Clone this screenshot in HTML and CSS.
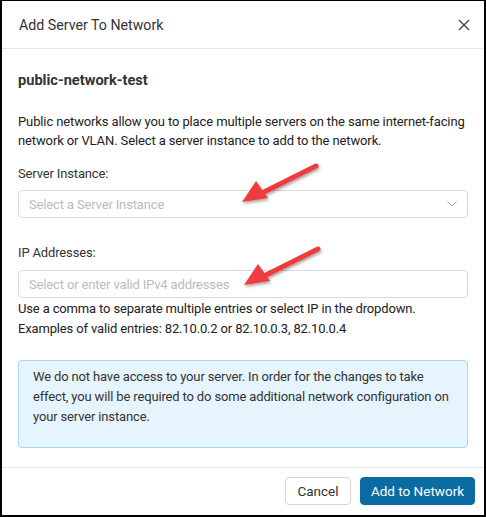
FILE: index.html
```html
<!DOCTYPE html>
<html>
<head>
    <title>Add Server To Network</title>
    <link rel="stylesheet" href="styles.css">
</head>
<body>
    <div class="modal">
        <div class="modal-header">
            <h2>Add Server To Network</h2>
            <button class="close-btn" aria-label="Close">
                <svg width="12" height="12" viewBox="0 0 12 12"><path d="M1 1L11 11M11 1L1 11" stroke="#444" stroke-width="1.4" fill="none"/></svg>
            </button>
        </div>
        <div class="modal-body">
            <h3>public-network-test</h3>
            <p class="intro">Public networks allow you to place multiple servers on the same internet-facing network or VLAN. Select a server instance to add to the network.</p>

            <label class="field-label">Server Instance:</label>
            <div class="select-box">
                <span class="placeholder">Select a Server Instance</span>
                <svg width="10" height="6" viewBox="0 0 10 6"><path d="M0.5 0.5L5 5L9.5 0.5" stroke="#999" stroke-width="1" fill="none"/></svg>
            </div>

            <label class="field-label ip-label">IP Addresses:</label>
            <div class="text-box">
                <span class="placeholder">Select or enter valid IPv4 addresses</span>
            </div>
            <p class="help">Use a comma to separate multiple entries or select IP in the dropdown.<br>Examples of valid entries: 82.10.0.2 or 82.10.0.3, 82.10.0.4</p>

            <div class="info-box">
                We do not have access to your server. In order for the changes to take effect, you will be required to do some additional network configuration on your server instance.
            </div>
        </div>
        <div class="modal-footer">
            <button class="btn btn-cancel">Cancel</button>
            <button class="btn btn-primary">Add to Network</button>
        </div>

        <svg class="arrow arrow-one" width="90" height="50" viewBox="0 0 90 50">
            <defs>
                <filter id="shadow" x="-20%" y="-20%" width="140%" height="160%">
                    <feDropShadow dx="1" dy="2" stdDeviation="1.5" flood-color="#000" flood-opacity="0.35"/>
                </filter>
            </defs>
            <g filter="url(#shadow)">
                <path d="M80 6L24 34" stroke="#ee3a3d" stroke-width="5" stroke-linecap="round"/>
                <path d="M6 42L20 21L32 38Z" fill="#ee3a3d"/>
            </g>
        </svg>
        <svg class="arrow arrow-two" width="90" height="50" viewBox="0 0 90 50">
            <g filter="url(#shadow)">
                <path d="M80 6L24 34" stroke="#ee3a3d" stroke-width="5" stroke-linecap="round"/>
                <path d="M6 42L20 21L32 38Z" fill="#ee3a3d"/>
            </g>
        </svg>
    </div>
</body>
</html>
```

FILE: styles.css
```css
* {
    box-sizing: border-box;
}
body {
    margin: 0;
    font-family: Roboto, "Liberation Sans", Arial, sans-serif;
    color: #222;
    background-color: #fff;
}
.modal {
    position: relative;
    width: 486px;
    height: 517px;
    border-top: 1px solid #000;
    border-left: 2px solid #000;
    border-right: 2px solid #000;
    border-bottom: 2px solid #000;
    display: flex;
    flex-direction: column;
}
.modal-header {
    height: 48px;
    padding: 0 10px 0 17px;
    border-bottom: 1px solid #e6e6e6;
    display: flex;
    align-items: center;
    justify-content: space-between;
}
.modal-header h2 {
    margin: 0;
    font-size: 14.2px;
    font-weight: 400;
    color: #333;
}
.close-btn {
    border: none;
    background: none;
    padding: 4px;
    display: flex;
    cursor: pointer;
}
.modal-body {
    flex: 1;
    padding: 0 16px;
    font-size: 13px;
    letter-spacing: -0.15px;
}
.modal-body h3 {
    margin: 21px 0 0;
    font-size: 14.6px;
    line-height: 20px;
    font-weight: 700;
    letter-spacing: 0;
    color: #333;
}
.intro {
    margin: 22px 0 0;
    line-height: 19px;
    letter-spacing: -0.12px;
}
.field-label {
    display: block;
    margin-top: 14px;
    line-height: 19px;
    color: #333;
}
.ip-label {
    margin-top: 25px;
}
.select-box,
.text-box {
    height: 28px;
    margin-top: 7px;
    border: 1px solid #dcdcdc;
    border-radius: 4px;
    padding: 0 10px;
    display: flex;
    align-items: center;
    justify-content: space-between;
}
.text-box {
    margin-top: 8px;
}
.placeholder {
    color: #bbb;
}
.help {
    margin: 1px 0 0;
    line-height: 20px;
}
.info-box {
    margin-top: 21px;
    padding: 6px 14px 20px;
    background-color: #e6f5fd;
    border: 1px solid #a6d8f5;
    border-radius: 4px;
    line-height: 20px;
    color: #333;
}
.modal-footer {
    height: 48px;
    border-top: 1px solid #e6e6e6;
    padding: 9px 9px 0 0;
    display: flex;
    justify-content: flex-end;
    align-items: flex-start;
    gap: 9px;
}
.btn {
    height: 28px;
    font-family: inherit;
    font-size: 13.5px;
    border-radius: 4px;
    cursor: pointer;
}
.btn-cancel {
    width: 66px;
    background-color: #fff;
    border: 1px solid #d4d4d4;
    color: #333;
}
.btn-primary {
    width: 115px;
    background-color: #0b6ba3;
    border: 1px solid #0b6ba3;
    color: #fff;
}
.arrow {
    position: absolute;
    pointer-events: none;
}
.arrow-one {
    left: 234px;
    top: 159px;
}
.arrow-two {
    left: 236px;
    top: 242px;
}
```
